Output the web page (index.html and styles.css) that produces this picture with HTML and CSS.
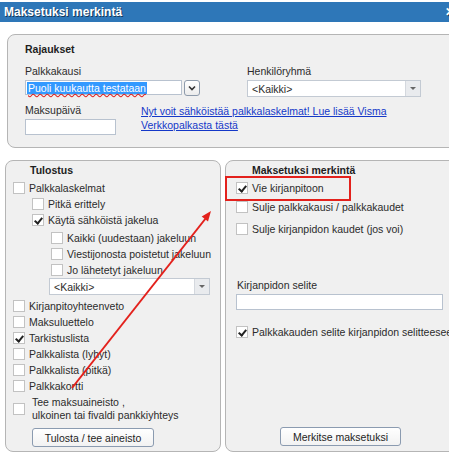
FILE: index.html
```html
<!DOCTYPE html>
<html lang="fi">
<head>
    <meta charset="UTF-8">
    <title>Maksetuksi merkintä</title>
    <link rel="stylesheet" href="styles.css">
</head>
<body>
    <div class="titlebar">
        <span>Maksetuksi merkintä</span>
        <span class="close">✕</span>
    </div>

    <div class="panel rajaukset">
        <div class="group-title">Rajaukset</div>
        <div class="field-row">
            <div class="field left-field">
                <div class="label">Palkkakausi</div>
                <div class="combo">
                    <div class="input period"><span class="selected">Puoli kuukautta testataan</span></div>
                    <div class="combo-btn">
                        <svg width="8" height="6" viewBox="0 0 8 6"><path d="M1 1.5 L4 4.5 L7 1.5" fill="none" stroke="#333" stroke-width="1.6"/></svg>
                    </div>
                </div>
            </div>
            <div class="field">
                <div class="label">Henkilöryhmä</div>
                <div class="select group-select">
                    <span>&lt;Kaikki&gt;</span>
                    <span class="select-arrow"><i></i></span>
                </div>
            </div>
        </div>
        <div class="field-row second">
            <div class="field">
                <div class="label">Maksupäivä</div>
                <div class="input date"></div>
            </div>
            <a class="promo" href="#">Nyt voit sähköistää palkkalaskelmat! Lue lisää Visma Verkkopalkasta tästä</a>
        </div>
    </div>

    <div class="columns">
        <div class="panel tulostus">
            <div class="group-title">Tulostus</div>
            <div class="row"><span class="cb"></span>Palkkalaskelmat</div>
            <div class="row lvl1"><span class="cb"></span>Pitkä erittely</div>
            <div class="row lvl1"><span class="cb on"></span>Käytä sähköistä jakelua</div>
            <div class="row lvl2 gap2"><span class="cb"></span>Kaikki (uudestaan) jakeluun</div>
            <div class="row lvl2"><span class="cb"></span>Viestijonosta poistetut jakeluun</div>
            <div class="row lvl2"><span class="cb"></span>Jo lähetetyt jakeluun</div>
            <div class="select delivery-select">
                <span>&lt;Kaikki&gt;</span>
                <span class="select-arrow"><i></i></span>
            </div>
            <div class="row gap3"><span class="cb"></span>Kirjanpitoyhteenveto</div>
            <div class="row"><span class="cb"></span>Maksuluettelo</div>
            <div class="row"><span class="cb on"></span>Tarkistuslista</div>
            <div class="row"><span class="cb"></span>Palkkalista (lyhyt)</div>
            <div class="row"><span class="cb"></span>Palkkalista (pitkä)</div>
            <div class="row"><span class="cb"></span>Palkkakortti</div>
            <div class="row double"><span class="cb"></span><span class="two-line">Tee maksuaineisto ,<br>ulkoinen tai fivaldi pankkiyhteys</span></div>
            <button class="btn print-btn">Tulosta / tee aineisto</button>
        </div>

        <div class="panel merkinta">
            <div class="group-title">Maksetuksi merkintä</div>
            <div class="row"><span class="cb on"></span>Vie kirjanpitoon</div>
            <div class="row gap3"><span class="cb"></span>Sulje palkkakausi / palkkakaudet</div>
            <div class="row gap6"><span class="cb"></span>Sulje kirjanpidon kaudet (jos voi)</div>
            <div class="label selite-label">Kirjanpidon selite</div>
            <div class="input selite"></div>
            <div class="row selite-row"><span class="cb on"></span>Palkkakauden selite kirjanpidon selitteeseen</div>
            <button class="btn mark-btn">Merkitse maksetuksi</button>
        </div>
    </div>

    <!-- annotation drawn over the dialog -->
    <svg class="annotation" width="449" height="453" viewBox="0 0 449 453">
        <rect x="226" y="177" width="124" height="23" fill="none" stroke="#e3211c" stroke-width="2"/>
        <line x1="72" y1="388" x2="206" y2="218" stroke="#e3211c" stroke-width="2"/>
        <polygon points="211,211 208,221.4 201.7,216.4" fill="#e3211c"/>
    </svg>
</body>
</html>
```

FILE: styles.css
```css
body {
    margin: 0;
    width: 449px;
    height: 453px;
    overflow: hidden;
    position: relative;
    background: #fff;
    font-family: 'Liberation Sans', Arial, sans-serif;
    font-size: 10.5px;
    color: #2b2b2b;
}

.titlebar {
    margin-top: 2px;
    height: 20px;
    background: #2e77b8;
    color: #fff;
    display: flex;
    align-items: center;
    justify-content: space-between;
    padding-left: 4px;
    font-family: 'Liberation Sans', Arial, sans-serif;
    font-weight: bold;
    font-size: 12px;
    text-shadow: 1px 1px 0 #17395a;
}

.close {
    margin-right: -6px;
    font-size: 12px;
}

.panel {
    box-sizing: border-box;
    flex: none;
    background: #f0f0f0;
    border: 1px solid #b5b5b5;
    border-radius: 8px;
}

.group-title {
    font-weight: bold;
    line-height: 14px;
    color: #1e1e1e;
}

.label {
    line-height: 14px;
}

.rajaukset {
    margin: 12px 0 0 7px;
    width: 470px;
    height: 114px;
    padding: 7px 0 0 17px;
}

.field-row {
    display: flex;
    margin-top: 8px;
}

.field-row.second {
    margin-top: 6px;
}

.left-field {
    width: 222px;
}

.label + .combo,
.label + .select,
.label + .input {
    margin-top: 2px;
}

.combo {
    display: flex;
    gap: 2px;
}

.input {
    box-sizing: border-box;
    background: #fff;
    border: 1px solid #b8c2cf;
}

.period {
    width: 157px;
    height: 15px;
    padding: 1px 0 0 1px;
    line-height: 12px;
}

.selected {
    display: inline-block;
    background: #3399ff;
    color: #fff;
    padding: 0 1px;
    text-decoration: underline wavy #d22;
    text-underline-offset: 1px;
}

.combo-btn {
    box-sizing: border-box;
    width: 16px;
    height: 16px;
    border: 1px solid #8e9bab;
    border-radius: 3px;
    background: linear-gradient(#fff, #ececec);
    display: flex;
    align-items: center;
    justify-content: center;
}

.select {
    box-sizing: border-box;
    display: flex;
    justify-content: space-between;
    align-items: center;
    height: 17px;
    background: #fff;
    border: 1px solid #c3cad3;
    padding-left: 4px;
}

.select-arrow {
    width: 14px;
    height: 15px;
    background: #e9ebee;
    border-left: 1px solid #d4d8de;
    display: flex;
    align-items: center;
    justify-content: center;
}

.select-arrow i {
    width: 0;
    height: 0;
    border-left: 3px solid transparent;
    border-right: 3px solid transparent;
    border-top: 3px solid #666;
}

.group-select {
    width: 174px;
}

.date {
    width: 91px;
    height: 16px;
}

.promo {
    margin: 1px 0 0 25px;
    width: 252px;
    line-height: 14px;
    color: #1438c8;
    text-decoration: underline;
}

.columns {
    display: flex;
    gap: 4px;
    margin: 12px 0 0 5px;
}

.tulostus {
    width: 216px;
    height: 292px;
    padding: 2px 6px 0 7px;
}

.tulostus .group-title {
    margin-left: 17px;
}

.merkinta {
    width: 270px;
    height: 292px;
    padding: 2px 0 5px 10px;
    display: flex;
    flex-direction: column;
}

.merkinta .group-title {
    margin-left: 16px;
}

.row {
    display: flex;
    align-items: center;
    height: 16px;
    white-space: nowrap;
}

.group-title + .row {
    margin-top: 3px;
}

.lvl1 {
    padding-left: 19px;
}

.lvl2 {
    padding-left: 38px;
}

.gap2 {
    margin-top: 2px;
}

.gap3 {
    margin-top: 3px;
}

.gap6 {
    margin-top: 6px;
}

.cb {
    box-sizing: border-box;
    flex: none;
    width: 12px;
    height: 12px;
    margin-right: 4px;
    background: #fff;
    border: 1px solid #c2c2c2;
    position: relative;
}

.cb.on::after {
    content: '';
    position: absolute;
    left: 3px;
    top: 1px;
    width: 3px;
    height: 6px;
    border: solid #222;
    border-width: 0 2px 2px 0;
    transform: rotate(40deg);
}

.delivery-select {
    width: 161px;
    margin-left: 36px;
}

.double {
    height: 26px;
    margin-top: 2px;
}

.double .cb {
    margin-right: 7px;
}

.two-line {
    line-height: 13px;
}

.btn {
    box-sizing: border-box;
    height: 19px;
    padding: 0;
    border: 1px solid #8b9bb0;
    border-radius: 3px;
    background: linear-gradient(#ffffff, #f2f2f2);
    font-family: 'Liberation Sans', Arial, sans-serif;
    font-size: 10.5px;
    color: #1e1e1e;
}

.print-btn {
    display: block;
    width: 122px;
    margin: 6px 0 0 19px;
}

.selite-label {
    margin: 41px 0 0 1px;
}

.selite {
    width: 207px;
    height: 16px;
}

.selite-row {
    margin-top: 14px;
}

.mark-btn {
    width: 121px;
    margin: auto 0 0 44px;
}

.annotation {
    position: absolute;
    left: 0;
    top: 0;
    pointer-events: none;
}
```
